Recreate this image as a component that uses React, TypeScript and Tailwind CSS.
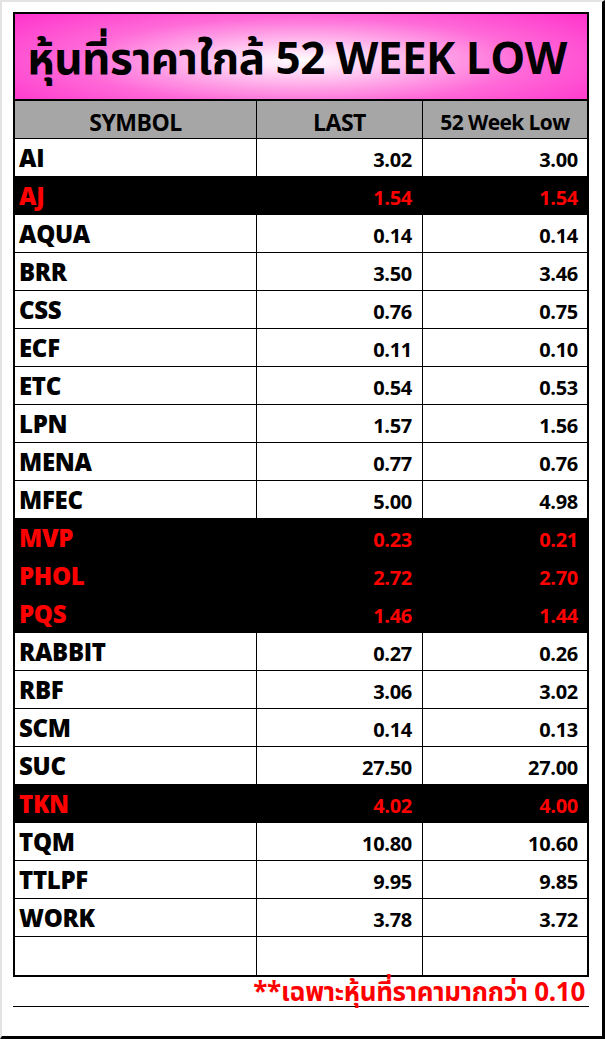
type Row = { sym: string; last: string; low: string; hot?: boolean };

const rows: Row[] = [
  { sym: "AI", last: "3.02", low: "3.00" },
  { sym: "AJ", last: "1.54", low: "1.54", hot: true },
  { sym: "AQUA", last: "0.14", low: "0.14" },
  { sym: "BRR", last: "3.50", low: "3.46" },
  { sym: "CSS", last: "0.76", low: "0.75" },
  { sym: "ECF", last: "0.11", low: "0.10" },
  { sym: "ETC", last: "0.54", low: "0.53" },
  { sym: "LPN", last: "1.57", low: "1.56" },
  { sym: "MENA", last: "0.77", low: "0.76" },
  { sym: "MFEC", last: "5.00", low: "4.98" },
  { sym: "MVP", last: "0.23", low: "0.21", hot: true },
  { sym: "PHOL", last: "2.72", low: "2.70", hot: true },
  { sym: "PQS", last: "1.46", low: "1.44", hot: true },
  { sym: "RABBIT", last: "0.27", low: "0.26" },
  { sym: "RBF", last: "3.06", low: "3.02" },
  { sym: "SCM", last: "0.14", low: "0.13" },
  { sym: "SUC", last: "27.50", low: "27.00" },
  { sym: "TKN", last: "4.02", low: "4.00", hot: true },
  { sym: "TQM", last: "10.80", low: "10.60" },
  { sym: "TTLPF", last: "9.95", low: "9.85" },
  { sym: "WORK", last: "3.78", low: "3.72" },
  { sym: "", last: "", low: "" },
];

const font = "font-['Open_Sans','Noto_Sans','Noto_Sans_Thai',sans-serif]";

export default function App() {
  return (
    <div
      className={`h-[1039px] w-[605px] border-t-2 border-l-2 border-r-[3px] border-b-[3px] border-t-[#e3e3e3] border-l-[#e3e3e3] border-r-black border-b-black bg-white pt-[10px] pl-[11px] ${font}`}
    >
      <div className="w-[576px] border-2 border-black">
        {/* title */}
        <div className="flex h-[87px] items-center justify-center border-b-2 border-black bg-[radial-gradient(ellipse_65%_85%_at_50%_55%,#ffffff_0%,#ffc2ef_25%,#ff6ad8_60%,#ff33cc_100%)]">
          <h1 className="pt-0 pr-[8px] text-[44px] font-bold leading-none tracking-[-0.5px] text-black">
            หุ้นที่ราคาใกล้ 52 WEEK LOW
          </h1>
        </div>
        {/* header */}
        <div className="grid h-[38px] grid-cols-[242px_166px_1fr] border-b border-black bg-[#a6a6a6] text-black">
          <div className="flex items-center justify-center border-r border-black pt-1 text-[23px] font-bold tracking-[-0.5px]">
            SYMBOL
          </div>
          <div className="flex items-center justify-center border-r border-black pt-1 text-[23px] font-bold tracking-[-0.5px]">
            LAST
          </div>
          <div className="flex items-center justify-center pt-1 text-[21px] font-bold tracking-[-0.6px]">
            52 Week Low
          </div>
        </div>
        {rows.map((r, i) => (
          <div
            key={i}
            className={`grid h-[38px] grid-cols-[242px_166px_1fr] font-bold ${
              i < rows.length - 1 ? "border-b border-black" : ""
            } ${r.hot ? "bg-black text-[#ff0000]" : "bg-white text-black"}`}
          >
            <div className="flex items-end border-r border-black pb-[4px] pl-[4px] text-[24px] leading-none font-extrabold tracking-[-0.3px]">
              <span className="pb-[2px]">{r.sym}</span>
            </div>
            <div className="flex items-end justify-end border-r border-black pr-[10px] pb-[6px] text-[20px] leading-none tracking-[-0.3px]">
              {r.last}
            </div>
            <div className="flex items-end justify-end pr-[9px] pb-[6px] text-[20px] leading-none tracking-[-0.3px]">
              {r.low}
            </div>
          </div>
        ))}
      </div>
      <div className="flex h-[30px] w-[576px] items-end justify-end border-b border-black pr-[4px] text-[26px] leading-[30px] font-bold tracking-[-0.3px] text-[#ff0000]">
        **เฉพาะหุ้นที่ราคามากกว่า 0.10
      </div>
    </div>
  );
}
